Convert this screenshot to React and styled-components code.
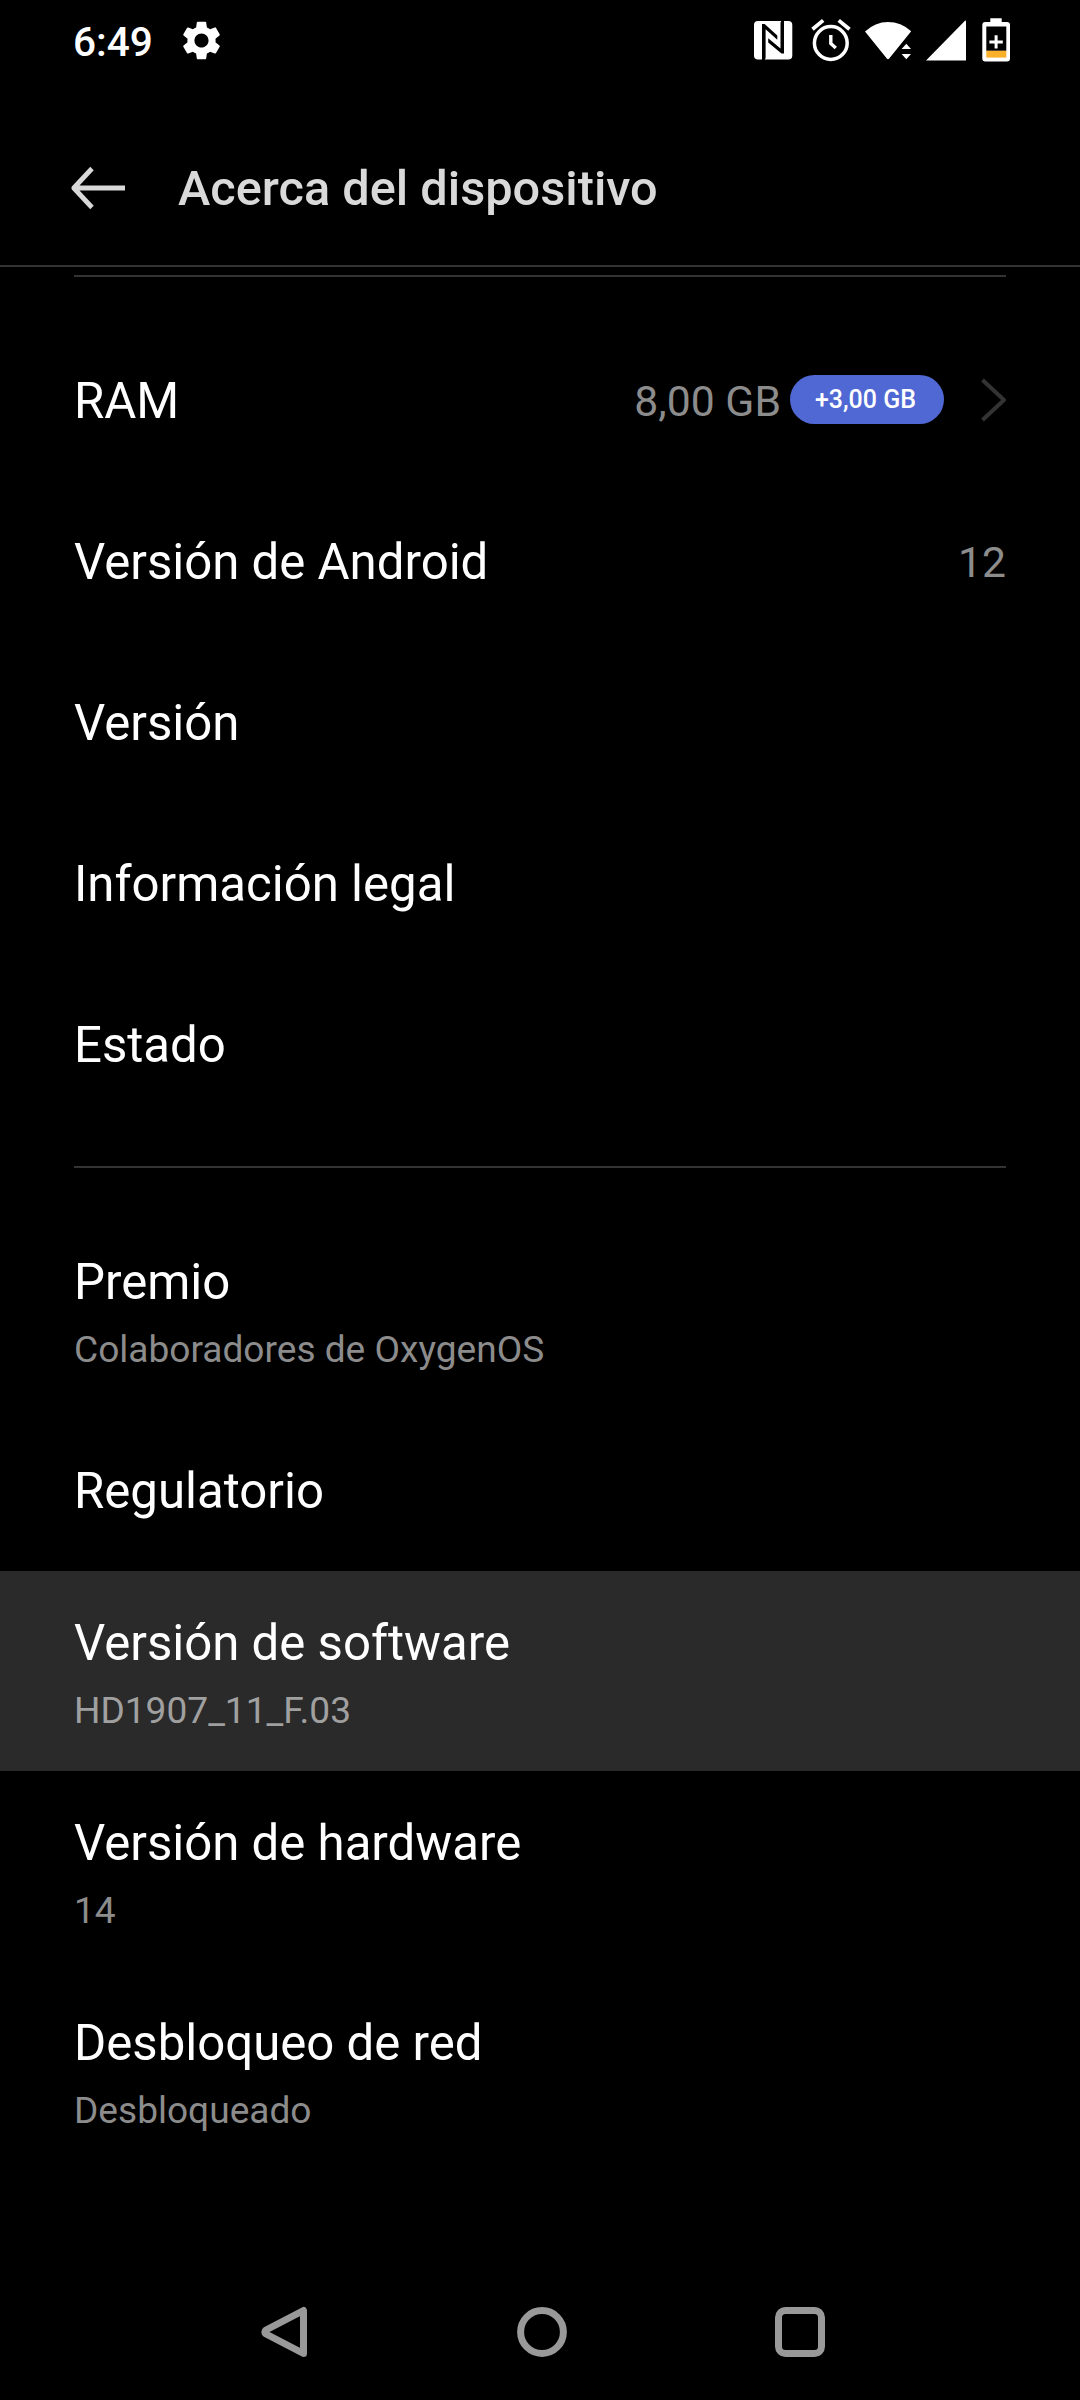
import React from 'react';
import styled, { createGlobalStyle } from 'styled-components';
import { MdSettings } from 'react-icons/md';

const GlobalStyle = createGlobalStyle`
  * { box-sizing: border-box; }
  body { margin: 0; background: #000; }
`;

const Screen = styled.div`
  width: 1080px;
  height: 2400px;
  display: flex;
  flex-direction: column;
  background: #000;
  color: #fff;
  font-family: Roboto, "Noto Sans", sans-serif;
  overflow: hidden;
`;

const StatusBar = styled.div`
  height: 80px;
  display: flex;
  align-items: center;
  padding: 0 68px 0 73px;
`;

const Clock = styled.span`
  font-size: 40.6px;
  font-weight: 500;
  line-height: 48px;
  margin-top: 4px;
`;

const GearIcon = styled(MdSettings)`
  width: 47px;
  height: 47px;
  margin-left: 25px;
`;

const StatusIcons = styled.svg`
  width: 264px;
  height: 80px;
  margin-left: auto;
`;

const Header = styled.header`
  height: 187px;
  display: flex;
  align-items: center;
  padding: 31px 71px 0 70px;
  border-bottom: 2px solid #333;
`;

const BackArrow = styled.svg`
  width: 56px;
  height: 48px;
`;

const Title = styled.h1`
  margin: 1px 0 0 52px;
  font-size: 48.7px;
  font-weight: 500;
  line-height: 60px;
  color: #d9d9d9;
`;

const List = styled.main`
  flex: 1;
  display: flex;
  flex-direction: column;
`;

const Divider = styled.hr`
  width: 932px;
  height: 2px;
  border: 0;
  background: #333;
  margin: ${(p) => p.$above}px 74px ${(p) => p.$below}px;
`;

const Row = styled.div`
  height: ${(p) => (p.$tall ? 200 : 161)}px;
  flex: none;
  display: flex;
  align-items: center;
  justify-content: space-between;
  padding: ${(p) => (p.$tall ? 4 : 0)}px 74px 0;
  background: ${(p) => (p.$pressed ? '#2a2a2a' : 'transparent')};
`;

const Labels = styled.div`
  display: flex;
  flex-direction: column;
  gap: 19px;
`;

const Label = styled.span`
  font-size: 49.15px;
  line-height: 56px;
  white-space: nowrap;
`;

const Summary = styled.span`
  font-size: 37.1px;
  line-height: 42px;
  color: ${(p) => (p.$pressed ? '#a0a0a0' : '#8c8c8c')};
  white-space: nowrap;
`;

const Trailing = styled.div`
  display: flex;
  align-items: center;
`;

const Value = styled.span`
  font-size: 42.7px;
  line-height: 50px;
  color: #8c8c8c;
  white-space: nowrap;
`;

const Pill = styled.span`
  width: 154px;
  height: 49px;
  margin: 0 36px 2px 9px;
  border-radius: 25px;
  background: #4f68d3;
  display: flex;
  align-items: center;
  justify-content: center;
  padding-right: 3px;
  font-size: 25px;
  font-weight: 500;
  white-space: nowrap;
`;

const Chevron = styled.svg`
  width: 26px;
  height: 46px;
  margin-bottom: 2px;
`;

const NavBar = styled.nav`
  height: 136px;
  display: flex;
  align-items: center;
  justify-content: space-between;
  padding: 0 254px 0 258px;
`;

const NavIcon = styled.svg`
  width: 52px;
  height: 52px;
  fill: none;
  stroke: #999;
  stroke-width: 7;
  stroke-linejoin: round;
`;

const basics = ['Versión', 'Información legal', 'Estado'];

const details = [
  { label: 'Premio', summary: 'Colaboradores de OxygenOS' },
  { label: 'Regulatorio' },
  { label: 'Versión de software', summary: 'HD1907_11_F.03', pressed: true },
  { label: 'Versión de hardware', summary: '14' },
  { label: 'Desbloqueo de red', summary: 'Desbloqueado' },
];

function SystemIcons() {
  return (
    <StatusIcons viewBox="748 0 264 80">
      {/* NFC */}
      <rect x="754" y="21" width="38.3" height="38.5" rx="4" fill="#fff" />
      <path d="M762 60V24H764.6L777.3 35.5V39.8L765.6 29.3V58L764.6 60Z" fill="#000" />
      <path d="M784 20.5V53.6H781.5L768.2 42.6V38.2L780.5 48.6V22.5L781.5 20.5Z" fill="#000" />
      {/* alarm */}
      <g fill="none" stroke="#fff">
        <circle cx="830.8" cy="43" r="16.4" strokeWidth="3.5" />
        <path d="M812.5 29.3L823.2 20.4M838.7 20.4L849.5 29.3" strokeWidth="3.8" />
        <path d="M830.8 35V43.5L835.8 48" strokeWidth="3.4" />
      </g>
      {/* wifi */}
      <path d="M865 31.6Q875 22 888 22T911.2 31.2L889.2 58.5Q888 60 886.8 58.5Z" fill="#fff" />
      <path d="M901.6 49L906.3 43.8L911 49ZM901.6 54L906.3 59.3L911 54Z" fill="#fff" />
      {/* signal */}
      <path d="M926 60.5L965 20.8Q966 20 966 21.5V60.5Z" fill="#fff" />
      {/* battery */}
      <path d="M990.3 18.3H1001.7V22H1007Q1010 22 1010 25V58.5Q1010 61.5 1007 61.5H985.3Q982.3 61.5 982.3 58.5V25Q982.3 22 985.3 22H990.3Z" fill="#fff" />
      <rect x="986.3" y="26.5" width="20" height="24.3" fill="#000" />
      <rect x="986.3" y="50.8" width="20" height="6.8" fill="#fbb029" />
      <path d="M996.1 35.3V48.6M989.4 42H1002.8" stroke="#fff" strokeWidth="3" />
    </StatusIcons>
  );
}

export default function App() {
  return (
    <Screen>
      <GlobalStyle />
      <StatusBar>
        <Clock>6:49</Clock>
        <GearIcon />
        <SystemIcons />
      </StatusBar>
      <Header>
        <BackArrow viewBox="0 0 56 48" fill="none" stroke="#d9d9d9" strokeWidth="4.8">
          <path d="M22 4.5L3.8 24L22 43.5M4 24H55" strokeLinejoin="round" />
        </BackArrow>
        <Title>Acerca del dispositivo</Title>
      </Header>
      <List>
        <Divider $above={8} $below={43} />
        <Row>
          <Label>RAM</Label>
          <Trailing>
            <Value>8,00 GB</Value>
            <Pill>+3,00 GB</Pill>
            <Chevron viewBox="0 0 26 46" fill="none" stroke="#333" strokeWidth="4">
              <path d="M2.5 3L24 23L2.5 43" strokeLinejoin="round" />
            </Chevron>
          </Trailing>
        </Row>
        <Row>
          <Label>Versión de Android</Label>
          <Value>12</Value>
        </Row>
        {basics.map((name) => (
          <Row key={name}>
            <Label>{name}</Label>
          </Row>
        ))}
        <Divider $above={41} $below={42} />
        {details.map(({ label, summary, pressed }) => (
          <Row key={label} $tall={Boolean(summary)} $pressed={pressed}>
            <Labels>
              <Label>{label}</Label>
              {summary && <Summary $pressed={pressed}>{summary}</Summary>}
            </Labels>
          </Row>
        ))}
      </List>
      <NavBar>
        <NavIcon viewBox="0 0 52 52">
          <path d="M45.5 4.5V47.5L8 28Q5.5 26 8 24Z" />
        </NavIcon>
        <NavIcon viewBox="0 0 52 52">
          <circle cx="26" cy="26" r="21.4" />
        </NavIcon>
        <NavIcon viewBox="0 0 52 52">
          <rect x="4.5" y="4.5" width="43" height="43" rx="7" />
        </NavIcon>
      </NavBar>
    </Screen>
  );
}
